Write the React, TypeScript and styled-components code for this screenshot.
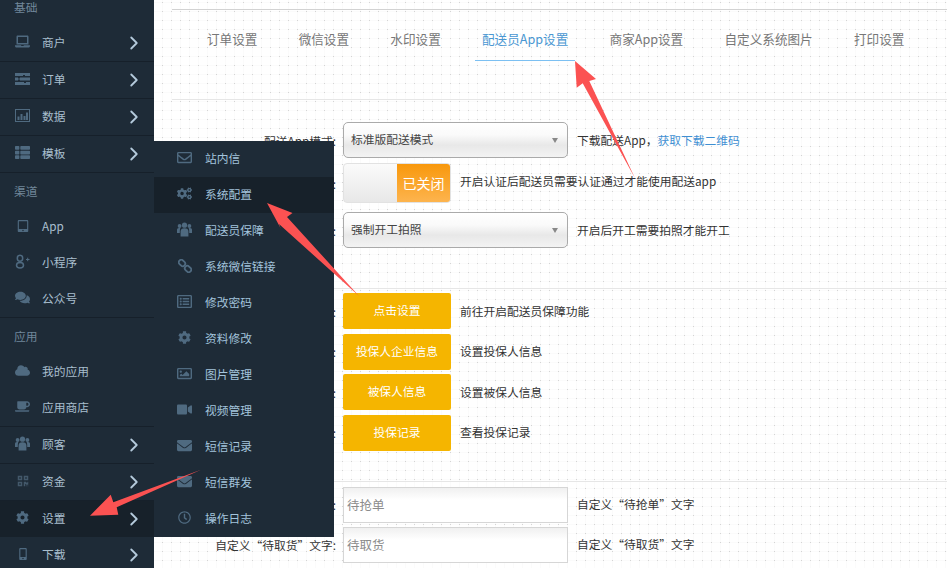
import React from "react";
import styled, { createGlobalStyle } from "styled-components";
import { ChevronRight } from "lucide-react";
import {
  FaLaptop, FaThList, FaTabletAlt, FaComments, FaCloud, FaCoffee, FaQrcode,
  FaCog, FaMobileAlt, FaRegEnvelope, FaCogs, FaRegListAlt, FaRegImage, FaVideo, FaEnvelope, FaRegClock,
} from "react-icons/fa";

const GlobalStyle = createGlobalStyle`
  html, body {
    margin: 0;
    height: 100%;
    overflow: hidden;
  }
  body {
    font-family: "Noto Sans CJK SC", "Liberation Sans", sans-serif;
    font-size: 11.75px;
    color: #333;
    background-color: #fff;
    background-image:
      radial-gradient(circle at 0.5px 0.5px, #d4d4d4 0.7px, transparent 0.8px),
      linear-gradient(to right, #fbfbfb 1px, transparent 1px),
      linear-gradient(#fbfbfb 1px, transparent 1px);
    background-size: 9px 9px;
    background-position: 0 2px;
  }
`;

const Layout = styled.div`
  position: relative;
  display: flex;
  width: 947px;
  height: 568px;
  overflow: hidden;
`;

const Sidebar = styled.nav`
  flex: 0 0 154px;
  margin-top: -11px;
  height: 590px;
  background: #1e2b37;
`;

const SectionTitle = styled.div`
  height: 36px;
  line-height: 35px;
  padding-left: 14px;
  color: #71879a;
`;

const NavItem = styled.div<{ $active?: boolean; $divider?: boolean }>`
  display: flex;
  align-items: center;
  gap: 12px;
  height: 33px;
  padding: 0 0 3px 15px;
  color: #a9bfce;
  background: ${(p) => (p.$active ? "#17212a" : "transparent")};
  border-bottom: ${(p) => (p.$divider ? "1px solid #16202a" : "0")};
`;

const IconSlot = styled.span<{ $size?: number; $dim?: boolean }>`
  display: flex;
  flex: 0 0 15px;
  align-items: center;
  justify-content: center;
  color: ${(p) => (p.$dim ? "#43586a" : "#4f6a80")};
  font-size: ${(p) => p.$size ?? 15}px;
`;

const Chevron = styled(ChevronRight)`
  margin-left: auto;
  margin-right: 9px;
  color: #b4cadb;
  transform: translateY(1px);
`;

const Flyout = styled.div`
  position: absolute;
  left: 154px;
  top: 141px;
  width: 180px;
  background: #1e2b37;
`;

const FlyoutItem = styled.div<{ $active?: boolean }>`
  display: flex;
  align-items: center;
  gap: 13px;
  height: 33px;
  padding: 0 0 3px 23px;
  color: #a3c4dc;
  background: ${(p) => (p.$active ? "#17212a" : "transparent")};
`;

const Main = styled.main`
  flex: 1;
  min-width: 0;
  padding: 9px 0 0 18px;
`;

const Rule = styled.div<{ $dark?: boolean }>`
  height: 1px;
  background: ${(p) => (p.$dark ? "#d2d2d2" : "#e6e6e6")};
`;

const Tabs = styled.div`
  display: flex;
  gap: 27.3px;
  height: 51px;
  margin-bottom: 38px;
  padding-left: 28px;
`;

const Tab = styled.div<{ $active?: boolean }>`
  padding: 20px 7px 0;
  font-size: 12.6px;
  line-height: 18px;
  color: ${(p) => (p.$active ? "#4a97d2" : "#777")};
  border-bottom: 1px solid ${(p) => (p.$active ? "#7cc0f2" : "transparent")};
`;

const FormGroup = styled.div<{ $top: number; $bottom: number; $gap: number }>`
  display: flex;
  flex-direction: column;
  gap: ${(p) => p.$gap}px;
  padding: ${(p) => p.$top}px 0 ${(p) => p.$bottom}px;
`;

const Row = styled.div<{ $spaced?: boolean }>`
  display: flex;
  align-items: center;
  margin-top: ${(p) => (p.$spaced ? "4px" : "0")};
`;

const Label = styled.label`
  flex: 0 0 164px;
  margin-right: 7px;
  text-align: right;
  white-space: nowrap;
  color: #333;
`;

const Hint = styled.span<{ $raised?: boolean }>`
  margin-left: 9px;
  padding-bottom: ${(p) => (p.$raised ? "6px" : "2px")};
  color: #333;
  white-space: nowrap;
`;

const Link = styled.a`
  color: #3f8fd2;
`;

const SelectBox = styled.div`
  position: relative;
  box-sizing: border-box;
  width: 225px;
  height: 36px;
  padding-left: 7px;
  line-height: 32px;
  color: #444;
  border: 1px solid #aaa;
  border-radius: 5px;
  background: linear-gradient(#fff, #fafafa 35%, #e8e8e8 65%, #f3f3f3);

  &::after {
    content: "";
    position: absolute;
    right: 9px;
    top: 15px;
    border-style: solid;
    border-width: 5px 3px 0;
    border-color: #888 transparent transparent;
  }
`;

const Switch = styled.div`
  display: flex;
  box-sizing: border-box;
  width: 108px;
  height: 40px;
  overflow: hidden;
  border: 1px solid #e2e2e2;
  border-radius: 4px;
  background: linear-gradient(#fbfbfb, #e8e8e8);
`;

const SwitchState = styled.span`
  flex: 0 0 53px;
  margin-left: auto;
  line-height: 38px;
  text-align: center;
  font-size: 14px;
  color: #fff;
  background: linear-gradient(#f8980c, #fdb44e);
`;

const YellowButton = styled.button`
  width: 108px;
  height: 36px;
  padding: 0 0 3px;
  border: 0;
  border-radius: 2px;
  background: #f5b500;
  color: #fff;
  font: inherit;
`;

const TextField = styled.input`
  box-sizing: border-box;
  width: 225px;
  height: 36px;
  padding: 0 3px;
  border: 1px solid #d6d6d6;
  outline: 0;
  background: linear-gradient(#f0f0f0, #fff 35%);
  font: inherit;
  font-size: 12.5px;

  &::placeholder {
    color: #8c8c8c;
  }
`;

const ArrowLayer = styled.svg`
  position: absolute;
  left: 0;
  top: 0;
  pointer-events: none;
`;

const OrdersIcon = () => (
  <svg width="15" height="12" viewBox="0 0 15 12" fill="currentColor">
    <path d="M0 0h15v3h-5v-1H8v1H0zM0 4.500h3v1h2v-1h10v3H5v-1H3v1H0zM0 9h9v1h2V9h4v3H0z" />
  </svg>
);

const ChartIcon = () => (
  <svg width="15" height="13" viewBox="0 0 15 13" fill="currentColor">
    <path d="M0 0h15v13H0zM1 1v11h13V1z" fillRule="evenodd" />
    <path d="M2.500 7.500h2V11h-2zM5.500 5h2v6h-2zM8.500 7h2v4h-2zM11 3.500h2V11h-2z" />
  </svg>
);

const ChainIcon = () => (
  <svg width="14" height="14" viewBox="0 0 14 14" fill="none" stroke="currentColor" strokeWidth="1.800">
    <rect x="0.500" y="1.500" width="7" height="5" rx="2.500" transform="rotate(45 4 4)" />
    <rect x="6.500" y="7.500" width="7" height="5" rx="2.500" transform="rotate(45 10 10)" />
  </svg>
);

const PeopleIcon = () => (
  <svg width="15" height="15" viewBox="0 0 15 15" fill="currentColor">
    <circle cx="2.600" cy="4" r="1.900" />
    <circle cx="12.400" cy="4" r="1.900" />
    <circle cx="7.500" cy="3.200" r="2.600" />
    <path d="M0 11V8c0-1.200.8-1.900 2-1.900h1.300C3 7 2.800 8 2.800 9v2zM15 11V8c0-1.200-.8-1.900-2-1.900h-1.300c.3.900.5 1.900.5 2.900v2z" />
    <path d="M3.600 14.500V9.500c0-2 1.400-3.200 3.900-3.200s3.900 1.200 3.900 3.200v5z" />
  </svg>
);

const GooglePlusIcon = () => (
  <svg width="15" height="15" viewBox="0 0 15 15" fill="none" stroke="currentColor" strokeWidth="1.500">
    <ellipse cx="5" cy="4.200" rx="2.700" ry="3" />
    <ellipse cx="5" cy="11.300" rx="3.500" ry="2.700" />
    <path d="M4.500 7.300c-.7.600-.3 1.300.6 2M11 5.500h3.500M12.700 3.700v3.500" strokeWidth="1" />
  </svg>
);

const FlyoutItems: { label: string; icon: React.ReactNode; active?: boolean; size?: number }[] = [
  { label: "站内信", icon: <FaRegEnvelope /> },
  { label: "系统配置", icon: <FaCogs />, active: true },
  { label: "配送员保障", icon: <PeopleIcon /> },
  { label: "系统微信链接", icon: <ChainIcon /> },
  { label: "修改密码", icon: <FaRegListAlt /> },
  { label: "资料修改", icon: <FaCog />, size: 13 },
  { label: "图片管理", icon: <FaRegImage /> },
  { label: "视频管理", icon: <FaVideo /> },
  { label: "短信记录", icon: <FaEnvelope /> },
  { label: "短信群发", icon: <FaEnvelope /> },
  { label: "操作日志", icon: <FaRegClock />, size: 13 },
];

const tabNames = ["订单设置", "微信设置", "水印设置", "配送员App设置", "商家App设置", "自定义系统图片", "打印设置"];

type ItemProps = {
  icon: React.ReactNode;
  label: string;
  more?: boolean;
  divider?: boolean;
  active?: boolean;
  size?: number;
  dim?: boolean;
};

const Item = ({ icon, label, more, divider, active, size, dim }: ItemProps) => (
  <NavItem $divider={divider} $active={active}>
    <IconSlot $size={size} $dim={dim}>{icon}</IconSlot>
    {label}
    {more && <Chevron size={22} strokeWidth={2} />}
  </NavItem>
);

export default function App() {
  return (
    <>
      <GlobalStyle />
      <Layout>
        <Sidebar>
          <SectionTitle>基础</SectionTitle>
          <Item icon={<FaLaptop />} label="商户" more divider />
          <Item icon={<OrdersIcon />} label="订单" more divider />
          <Item icon={<ChartIcon />} label="数据" more divider />
          <Item icon={<FaThList />} label="模板" more divider />
          <SectionTitle>渠道</SectionTitle>
          <Item icon={<FaTabletAlt />} label="App" size={12} />
          <Item icon={<GooglePlusIcon />} label="小程序" />
          <Item icon={<FaComments />} label="公众号" divider />
          <SectionTitle>应用</SectionTitle>
          <Item icon={<FaCloud />} label="我的应用" />
          <Item icon={<FaCoffee />} label="应用商店" divider />
          <Item icon={<PeopleIcon />} label="顾客" more divider />
          <Item icon={<FaQrcode />} label="资金" more divider size={12} dim />
          <Item icon={<FaCog />} label="设置" more active size={13} />
          <Item icon={<FaMobileAlt />} label="下载" more size={12} />
        </Sidebar>

        <Main>
          <Rule $dark />
          <Tabs>
            {tabNames.map((name) => (
              <Tab key={name} $active={name === "配送员App设置"}>{name}</Tab>
            ))}
          </Tabs>
          <Rule />

          <FormGroup $top={22} $bottom={40} $gap={5}>
            <Row>
              <Label>配送App模式:</Label>
              <SelectBox>标准版配送模式</SelectBox>
              <Hint>下载配送App，<Link>获取下载二维码</Link></Hint>
            </Row>
            <Row>
              <Label>配送员认证:</Label>
              <Switch><SwitchState>已关闭</SwitchState></Switch>
              <Hint $raised>开启认证后配送员需要认证通过才能使用配送app</Hint>
            </Row>
            <Row $spaced>
              <Label>开工拍照:</Label>
              <SelectBox>强制开工拍照</SelectBox>
              <Hint>开启后开工需要拍照才能开工</Hint>
            </Row>
          </FormGroup>
          <Rule />

          <FormGroup $top={4} $bottom={30} $gap={4.67}>
            <Row>
              <Label>配送员保障:</Label>
              <YellowButton>点击设置</YellowButton>
              <Hint>前往开启配送员保障功能</Hint>
            </Row>
            <Row>
              <Label>投保人企业信息:</Label>
              <YellowButton>投保人企业信息</YellowButton>
              <Hint>设置投保人信息</Hint>
            </Row>
            <Row>
              <Label>被保人信息:</Label>
              <YellowButton>被保人信息</YellowButton>
              <Hint>设置被保人信息</Hint>
            </Row>
            <Row>
              <Label>投保记录:</Label>
              <YellowButton>投保记录</YellowButton>
              <Hint>查看投保记录</Hint>
            </Row>
          </FormGroup>
          <Rule />

          <FormGroup $top={5} $bottom={0} $gap={4}>
            <Row>
              <Label>自定义“待抢单”文字:</Label>
              <TextField placeholder="待抢单" />
              <Hint>自定义“待抢单”文字</Hint>
            </Row>
            <Row>
              <Label>自定义“待取货”文字:</Label>
              <TextField placeholder="待取货" />
              <Hint>自定义“待取货”文字</Hint>
            </Row>
          </FormGroup>
        </Main>

        <Flyout>
          {FlyoutItems.map((item) => (
            <FlyoutItem key={item.label} $active={item.active}>
              <IconSlot $size={item.size}>{item.icon}</IconSlot>
              {item.label}
            </FlyoutItem>
          ))}
        </Flyout>

        <ArrowLayer width="947" height="568" viewBox="0 0 947 568" fill="#fb5252">
          <polygon points="575,61 596,79 589.300,81 635,178.300 582.700,83.300 576.700,87.700" />
          <polygon points="267,203 292.500,213 287,217 359,296 279,224 280.500,228" />
          <polygon points="90,515.700 110.700,494.700 113.300,502.300 201,469.700 116.700,507.300 118.300,514.700" />
        </ArrowLayer>
      </Layout>
    </>
  );
}
